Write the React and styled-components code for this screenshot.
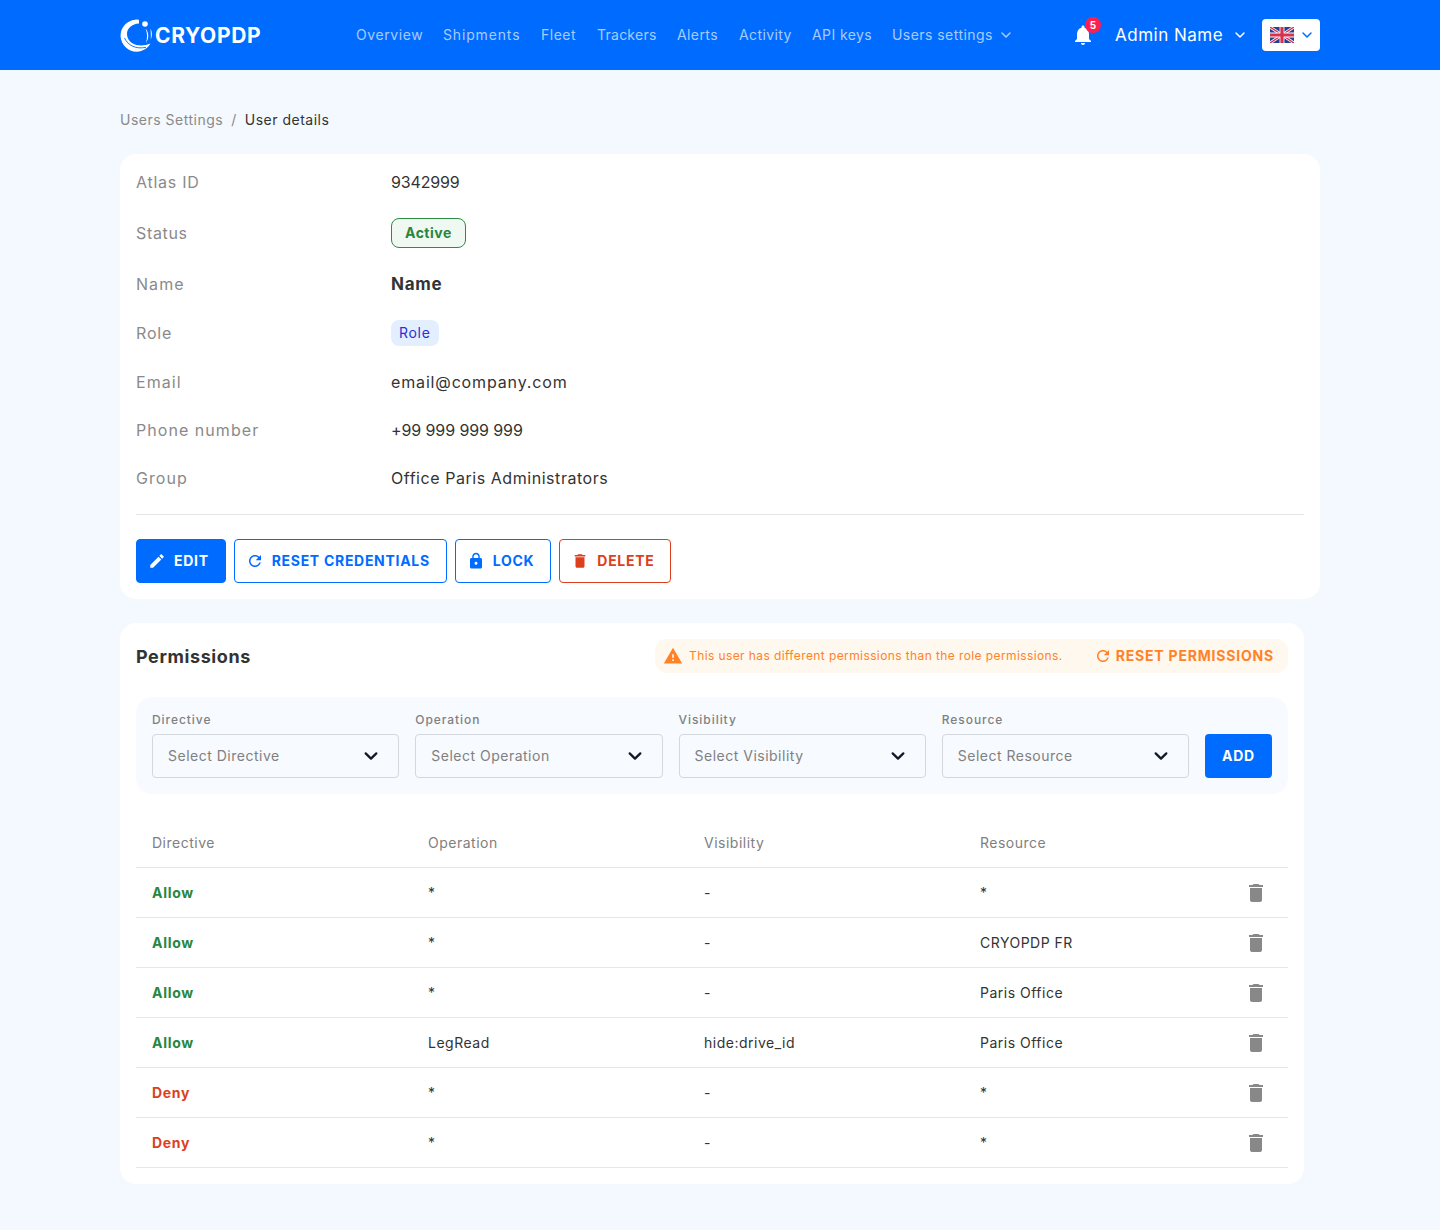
import React from "react";
import styled, { createGlobalStyle } from "styled-components";

const Global = createGlobalStyle`
  html, body { margin: 0; padding: 0; background: #f4f8ff; }
  body { font-family: Inter, "Noto Sans", "Liberation Sans", sans-serif; color: #333; }
  * { box-sizing: border-box; }
`;

const Page = styled.div`
  width: 1440px;
  min-height: 1230px;
  background: #f4f8ff;
`;
const Header = styled.header`
  height: 70px;
  background: #006cff;
  padding: 0 120px;
  display: flex;
  align-items: center;
`;
const Logo = styled.div`
  display: flex;
  align-items: center;
  width: 236px;
  gap: 2px;
  color: #fff;
  font-size: 21px;
  font-weight: 700;
  letter-spacing: 0.65px;
`;
const Nav = styled.nav`
  display: flex;
  align-items: center;
  gap: 20px;
  width: 715px;
`;
const NavLink = styled.span`
  display: inline-flex;
  align-items: center;
  gap: 7px;
`;
const NavText = styled.span`
  display: block;
  width: ${(p) => p.$w}px;
  color: #a8cbff;
  font-size: 14px;
  line-height: 16px;
  letter-spacing: ${(p) => p.$ls}px;
  white-space: nowrap;
`;
const BellWrap = styled.div`
  position: relative;
  width: 24px;
  height: 24px;
  margin-right: 20px;
`;
const BellBadge = styled.span`
  position: absolute;
  top: -6px;
  left: 14px;
  width: 16px;
  height: 16px;
  border-radius: 50%;
  background: #ff1f4f;
  color: #fff;
  font-size: 10px;
  font-weight: 700;
  display: flex;
  align-items: center;
  justify-content: center;
`;
const UserName = styled.span`
  display: inline-flex;
  align-items: center;
  gap: 11px;
  color: #fff;
  font-size: 17px;
  letter-spacing: 0.5px;
  white-space: nowrap;
`;
const LangButton = styled.div`
  margin-left: auto;
  width: 58px;
  height: 32px;
  border-radius: 4px;
  background: #fff;
  display: flex;
  align-items: center;
  gap: 7px;
  padding-left: 8px;
`;

const Main = styled.main`
  padding: 0 120px;
`;
const Crumbs = styled.div`
  height: 84px;
  display: flex;
  align-items: center;
  gap: 8px;
  padding-top: 16px;
  font-size: 14px;
  line-height: 16px;
  letter-spacing: 0.5px;
  color: #8a8a8a;
`;
const CrumbNow = styled.span`
  color: #333;
`;
const Card = styled.section`
  background: #fff;
  border-radius: 16px;
  padding: 16px;
  width: ${(p) => p.$width || "1200px"};
  margin-top: ${(p) => p.$gap || 0}px;
`;
const InfoRows = styled.div`
  display: flex;
  flex-direction: column;
  gap: 24px;
  padding-bottom: 24px;
  border-bottom: 1px solid #e4e4e4;
`;
const InfoRow = styled.div`
  display: grid;
  grid-template-columns: 255px 1fr;
  align-items: center;
`;
const InfoLabel = styled.span`
  font-size: 16px;
  line-height: 24px;
  letter-spacing: ${(p) => p.$ls ?? 1.05}px;
  color: #8a8a8a;
`;
const InfoValue = styled.span`
  font-size: ${(p) => p.$size || 16}px;
  line-height: 24px;
  letter-spacing: ${(p) => p.$ls ?? 0.55}px;
  color: #333;
  font-weight: ${(p) => p.$weight || 400};
`;
const StatusBadge = styled.span`
  justify-self: start;
  height: 30px;
  padding: 0 13px;
  border: 1px solid #2e8b45;
  border-radius: 8px;
  background: #eff8f1;
  color: #2a8540;
  font-size: 14px;
  line-height: 16px;
  font-weight: 700;
  letter-spacing: 0.5px;
  display: flex;
  align-items: center;
`;
const RoleBadge = styled.span`
  justify-self: start;
  height: 26px;
  padding: 0 8px;
  border-radius: 8px;
  background: #e3eeff;
  color: #2a2ed8;
  font-size: 14px;
  line-height: 16px;
  letter-spacing: 0.7px;
  display: flex;
  align-items: center;
`;
const Actions = styled.div`
  display: flex;
  gap: 8px;
  margin-top: 24px;
`;
const Button = styled.button`
  height: 44px;
  padding: 0 16px 0 11px;
  border-radius: 4px;
  border: 1px solid ${(p) => p.$color};
  background: ${(p) => (p.$solid ? p.$color : "#fff")};
  color: ${(p) => (p.$solid ? "#fff" : p.$color)};
  font-family: inherit;
  font-size: 14px;
  line-height: 16px;
  font-weight: 700;
  letter-spacing: 0.7px;
  display: inline-flex;
  align-items: center;
  gap: 8px;
  white-space: nowrap;
`;
const ButtonIcon = styled.svg`
  width: ${(p) => p.$size || 18}px;
  height: ${(p) => p.$size || 18}px;
  fill: currentColor;
  flex: none;
`;
const PermHead = styled.div`
  display: flex;
  align-items: center;
  justify-content: space-between;
  height: 34px;
`;
const PermTitle = styled.h2`
  margin: 2px 0 0;
  font-size: 18px;
  line-height: 20px;
  font-weight: 700;
  letter-spacing: 0.6px;
  color: #333;
`;
const Notice = styled.div`
  width: 633px;
  height: 34px;
  padding: 0 14px 0 8px;
  border-radius: 12px;
  background: #fff8ee;
  color: #ff8228;
  display: flex;
  align-items: center;
  justify-content: space-between;
`;
const NoticeText = styled.span`
  display: inline-flex;
  align-items: center;
  gap: 6px;
  font-size: 12px;
  line-height: 14px;
  letter-spacing: 0.4px;
`;
const NoticeAction = styled.span`
  display: inline-flex;
  align-items: center;
  gap: 4px;
  font-size: 14px;
  line-height: 16px;
  font-weight: 700;
  letter-spacing: 0.8px;
`;
const FilterBar = styled.div`
  margin-top: 24px;
  padding: 16px;
  height: 97px;
  border-radius: 16px;
  background: #f7faff;
  display: flex;
  align-items: flex-end;
  gap: 16px;
`;
const Field = styled.label`
  flex: 1;
  display: flex;
  flex-direction: column;
  gap: 7px;
`;
const FieldLabel = styled.span`
  font-size: 12px;
  line-height: 14px;
  font-weight: 500;
  letter-spacing: 0.95px;
  color: #808080;
`;
const Select = styled.div`
  height: 44px;
  border: 1px solid #d3d8df;
  border-radius: 4px;
  padding: 0 19px 0 15px;
  display: flex;
  align-items: center;
  justify-content: space-between;
  font-size: 14px;
  line-height: 16px;
  letter-spacing: 0.5px;
  color: #808080;
`;
const AddButton = styled.button`
  flex: none;
  width: 67px;
  height: 44px;
  border: none;
  border-radius: 4px;
  background: #006cff;
  color: #fff;
  font-family: inherit;
  font-size: 14px;
  line-height: 16px;
  font-weight: 700;
  letter-spacing: 0.8px;
`;
const Table = styled.div`
  margin-top: 24px;
`;
const Row = styled.div`
  display: grid;
  grid-template-columns: 276px 276px 276px 1fr 24px;
  align-items: center;
  height: 50px;
  padding: 0 20px 0 16px;
  border-bottom: 1px solid #e6e6e6;
  font-size: 14px;
  letter-spacing: 0.5px;
  color: #333;
`;
const HeadCell = styled.span`
  color: #808080;
`;
const Directive = styled.span`
  font-weight: 700;
  letter-spacing: 0.7px;
  color: ${(p) => (p.$deny ? "#dc3f1e" : "#2a8540")};
`;
const Trash = styled.svg`
  width: 24px;
  height: 24px;
  fill: #888;
`;

const P = {
  edit: "M3 17.25V21h3.75L17.81 9.94l-3.75-3.75L3 17.25zM20.71 7.04c.39-.39.39-1.02 0-1.41l-2.34-2.34c-.39-.39-1.02-.39-1.41 0l-1.83 1.83 3.75 3.75 1.83-1.83z",
  refresh: "M17.65 6.35C16.2 4.9 14.21 4 12 4c-4.42 0-7.99 3.58-7.99 8s3.57 8 7.99 8c3.73 0 6.84-2.55 7.73-6h-2.08c-.82 2.33-3.04 4-5.65 4-3.31 0-6-2.69-6-6s2.69-6 6-6c1.66 0 3.14.69 4.22 1.78L13 11h7V4l-2.35 2.35z",
  lock: "M18 8h-1V6c0-2.76-2.24-5-5-5S7 3.24 7 6v2H6c-1.1 0-2 .9-2 2v10c0 1.1.9 2 2 2h12c1.1 0 2-.9 2-2V10c0-1.1-.9-2-2-2zm-6 9c-1.1 0-2-.9-2-2s.9-2 2-2 2 .9 2 2-.9 2-2 2zm3.1-9H8.9V6c0-1.71 1.39-3.1 3.1-3.1 1.71 0 3.1 1.39 3.1 3.1v2z",
  trash: "M6 19c0 1.1.9 2 2 2h8c1.1 0 2-.9 2-2V7H6v12zM19 4h-3.5l-1-1h-5l-1 1H5v2h14V4z",
  warn: "M1 21h22L12 2 1 21zm12-3h-2v-2h2v2zm0-4h-2v-4h2v4z",
  bell: "M12 22c1.1 0 2-.9 2-2h-4c0 1.1.9 2 2 2zm6-6v-5c0-3.07-1.64-5.64-4.5-6.32V4c0-.83-.67-1.5-1.5-1.5s-1.5.67-1.5 1.5v.68C7.63 5.36 6 7.92 6 11v5l-2 2v1h16v-1l-2-2z",
};

const Chevron = ({ color = "currentColor", w = 1.5, size = 12 }) => (
  <svg width={size} height={size} viewBox="0 0 12 12" fill="none" stroke={color} strokeWidth={w} strokeLinecap="round" strokeLinejoin="round">
    <path d="M2 4l4 4 4-4" />
  </svg>
);

const LogoMark = () => (
  <svg width="33" height="33" viewBox="0 0 33 33" fill="#fff">
    <path d="M19 .8A16 16 0 1 0 30.500 24.500C26 26.500 21 27 16.500 26 10.500 24.500 7 20 7 15 7 9 12 5 19 4.500z" />
    <path d="M4.500 19C8 26.500 16 30.500 26 28.300" fill="none" stroke="#006cff" strokeWidth=".9" />
    <circle cx="25" cy="5" r="2.800" />
    <path d="M25.500 9.500c3.500 4 3.800 9.500.5 14.500 1.500-5 1.500-10-.5-14.500z" />
    <path d="M30.500 9.500c1.800 3.500 1.800 7.500.3 11 .2-3.500 0-7.500-.3-11z" />
  </svg>
);

const Flag = () => (
  <svg width="24" height="16" viewBox="0 0 60 40">
    <clipPath id="fl"><rect width="60" height="40" /></clipPath>
    <g clipPath="url(#fl)">
      <rect width="60" height="40" fill="#27408f" />
      <path d="M0 0l60 40M60 0L0 40" stroke="#fff" strokeWidth="7" />
      <path d="M0 0l60 40M60 0L0 40" stroke="#d8304f" strokeWidth="3.500" />
      <path d="M30 0v40M0 20h60" stroke="#fff" strokeWidth="12" />
      <path d="M30 0v40M0 20h60" stroke="#d8304f" strokeWidth="8" />
    </g>
  </svg>
);

const Icon = ({ d, size }) => (
  <ButtonIcon viewBox="0 0 24 24" $size={size}>
    <path d={d} />
  </ButtonIcon>
);

const navItems = [
  ["Overview", 67, 0.6],
  ["Shipments", 78, 0.85],
  ["Fleet", 36, 0.5],
  ["Trackers", 60, 0.25],
  ["Alerts", 42, 0.4],
  ["Activity", 53, 0.4],
  ["API keys", 60, 0.4],
];

const rows = [
  ["Allow", "*", "-", "*"],
  ["Allow", "*", "-", "CRYOPDP FR"],
  ["Allow", "*", "-", "Paris Office"],
  ["Allow", "LegRead", "hide:drive_id", "Paris Office"],
  ["Deny", "*", "-", "*"],
  ["Deny", "*", "-", "*"],
];

const BLUE = "#006cff";
const RED = "#dc3f1e";

export default function App() {
  return (
    <Page>
      <Global />
      <Header>
        <Logo>
          <LogoMark />
          <span>CRYOPDP</span>
        </Logo>
        <Nav>
          {navItems.map(([n, w, ls]) => (
            <NavLink key={n}>
              <NavText $w={w} $ls={ls}>{n}</NavText>
            </NavLink>
          ))}
          <NavLink>
            <NavText $w={101} $ls={0.45}>Users settings</NavText>
            <Chevron color="#a8cbff" />
          </NavLink>
        </Nav>
        <BellWrap>
          <svg width="24" height="24" viewBox="0 0 24 24" fill="#fff">
            <path d={P.bell} />
          </svg>
          <BellBadge>5</BellBadge>
        </BellWrap>
        <UserName>
          Admin Name <Chevron />
        </UserName>
        <LangButton>
          <Flag />
          <Chevron color="#006cff" />
        </LangButton>
      </Header>
      <Main>
        <Crumbs>
          <span>Users Settings</span>
          <span>/</span>
          <CrumbNow>User details</CrumbNow>
        </Crumbs>
        <Card>
          <InfoRows>
            <InfoRow>
              <InfoLabel $ls={0.75}>Atlas ID</InfoLabel>
              <InfoValue $ls={-0.15}>9342999</InfoValue>
            </InfoRow>
            <InfoRow>
              <InfoLabel $ls={0.65}>Status</InfoLabel>
              <StatusBadge>Active</StatusBadge>
            </InfoRow>
            <InfoRow>
              <InfoLabel>Name</InfoLabel>
              <InfoValue $weight={700} $size={17} $ls={0.7}>Name</InfoValue>
            </InfoRow>
            <InfoRow>
              <InfoLabel $ls={0.85}>Role</InfoLabel>
              <RoleBadge>Role</RoleBadge>
            </InfoRow>
            <InfoRow>
              <InfoLabel>Email</InfoLabel>
              <InfoValue $ls={0.85}>email@company.com</InfoValue>
            </InfoRow>
            <InfoRow>
              <InfoLabel>Phone number</InfoLabel>
              <InfoValue $ls={-0.1}>+99 999 999 999</InfoValue>
            </InfoRow>
            <InfoRow>
              <InfoLabel>Group</InfoLabel>
              <InfoValue>Office Paris Administrators</InfoValue>
            </InfoRow>
          </InfoRows>
          <Actions>
            <Button $solid $color={BLUE}><Icon d={P.edit} />EDIT</Button>
            <Button $color={BLUE}><Icon d={P.refresh} />RESET CREDENTIALS</Button>
            <Button $color={BLUE}><Icon d={P.lock} />LOCK</Button>
            <Button $color={RED}><Icon d={P.trash} />DELETE</Button>
          </Actions>
        </Card>
        <Card $width="1184px" $gap={24}>
          <PermHead>
            <PermTitle>Permissions</PermTitle>
            <Notice>
              <NoticeText><Icon d={P.warn} size={20} />This user has different permissions than the role permissions.</NoticeText>
              <NoticeAction><Icon d={P.refresh} />RESET PERMISSIONS</NoticeAction>
            </Notice>
          </PermHead>
          <FilterBar>
            {["Directive", "Operation", "Visibility", "Resource"].map((f) => (
              <Field key={f}>
                <FieldLabel>{f}</FieldLabel>
                <Select>
                  Select {f}
                  <Chevron color="#111827" w={1.7} size={16} />
                </Select>
              </Field>
            ))}
            <AddButton>ADD</AddButton>
          </FilterBar>
          <Table>
            <Row>
              <HeadCell>Directive</HeadCell>
              <HeadCell>Operation</HeadCell>
              <HeadCell>Visibility</HeadCell>
              <HeadCell>Resource</HeadCell>
            </Row>
            {rows.map((r, i) => (
              <Row key={i}>
                <Directive $deny={r[0] === "Deny"}>{r[0]}</Directive>
                <span>{r[1]}</span>
                <span>{r[2]}</span>
                <span>{r[3]}</span>
                <Trash viewBox="0 0 24 24"><path d={P.trash} /></Trash>
              </Row>
            ))}
          </Table>
        </Card>
      </Main>
    </Page>
  );
}
